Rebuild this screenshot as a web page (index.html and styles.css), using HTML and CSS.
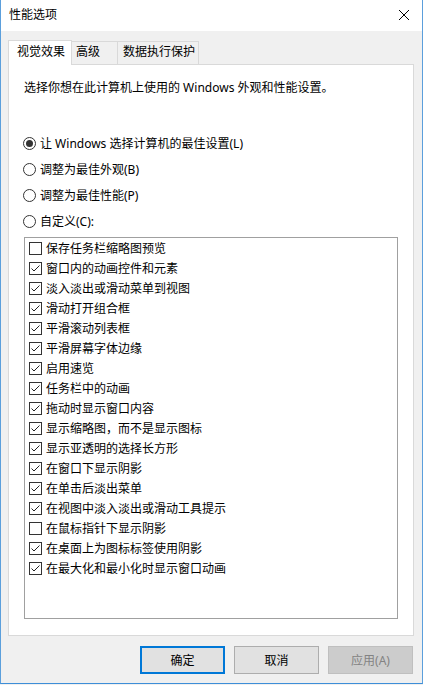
FILE: index.html
```html
<!DOCTYPE html>
<html lang="zh-CN">
<head>
<meta charset="utf-8">
<title>性能选项</title>
<link rel="stylesheet" href="styles.css">
</head>
<body>
<div class="window">
  <div class="titlebar">
    <span class="title">性能选项</span>
    <span class="close"><svg width="12" height="12" viewBox="0 0 12 12"><path d="M1 1 L11 11 M11 1 L1 11" stroke="#000" stroke-width="1" fill="none"/></svg></span>
  </div>
  <div class="content">
    <div class="tabs">
      <div class="tab tab-active">视觉效果</div>
      <div class="tab tab-adv">高级</div>
      <div class="tab tab-dep">数据执行保护</div>
    </div>
    <div class="panel">
      <p class="desc">选择你想在此计算机上使用的 Windows 外观和性能设置。</p>
      <div class="radios">
        <div class="radio-row"><span class="radio radio-on"></span><span>让 Windows 选择计算机的最佳设置(L)</span></div>
        <div class="radio-row"><span class="radio"></span><span>调整为最佳外观(B)</span></div>
        <div class="radio-row"><span class="radio"></span><span>调整为最佳性能(P)</span></div>
        <div class="radio-row"><span class="radio"></span><span>自定义(C):</span></div>
      </div>
      <div class="listbox">
        <div class="item"><span class="cb"></span><span>保存任务栏缩略图预览</span></div>
        <div class="item"><span class="cb cb-on"><svg width="11" height="11" viewBox="0 0 11 11"><path d="M1.5 5.5 L4 8 L9.5 2.5" stroke="#222" stroke-width="1" fill="none"/></svg></span><span>窗口内的动画控件和元素</span></div>
        <div class="item"><span class="cb cb-on"><svg width="11" height="11" viewBox="0 0 11 11"><path d="M1.5 5.5 L4 8 L9.5 2.5" stroke="#222" stroke-width="1" fill="none"/></svg></span><span>淡入淡出或滑动菜单到视图</span></div>
        <div class="item"><span class="cb cb-on"><svg width="11" height="11" viewBox="0 0 11 11"><path d="M1.5 5.5 L4 8 L9.5 2.5" stroke="#222" stroke-width="1" fill="none"/></svg></span><span>滑动打开组合框</span></div>
        <div class="item"><span class="cb cb-on"><svg width="11" height="11" viewBox="0 0 11 11"><path d="M1.5 5.5 L4 8 L9.5 2.5" stroke="#222" stroke-width="1" fill="none"/></svg></span><span>平滑滚动列表框</span></div>
        <div class="item"><span class="cb cb-on"><svg width="11" height="11" viewBox="0 0 11 11"><path d="M1.5 5.5 L4 8 L9.5 2.5" stroke="#222" stroke-width="1" fill="none"/></svg></span><span>平滑屏幕字体边缘</span></div>
        <div class="item"><span class="cb cb-on"><svg width="11" height="11" viewBox="0 0 11 11"><path d="M1.5 5.5 L4 8 L9.5 2.5" stroke="#222" stroke-width="1" fill="none"/></svg></span><span>启用速览</span></div>
        <div class="item"><span class="cb cb-on"><svg width="11" height="11" viewBox="0 0 11 11"><path d="M1.5 5.5 L4 8 L9.5 2.5" stroke="#222" stroke-width="1" fill="none"/></svg></span><span>任务栏中的动画</span></div>
        <div class="item"><span class="cb cb-on"><svg width="11" height="11" viewBox="0 0 11 11"><path d="M1.5 5.5 L4 8 L9.5 2.5" stroke="#222" stroke-width="1" fill="none"/></svg></span><span>拖动时显示窗口内容</span></div>
        <div class="item"><span class="cb cb-on"><svg width="11" height="11" viewBox="0 0 11 11"><path d="M1.5 5.5 L4 8 L9.5 2.5" stroke="#222" stroke-width="1" fill="none"/></svg></span><span>显示缩略图，而不是显示图标</span></div>
        <div class="item"><span class="cb cb-on"><svg width="11" height="11" viewBox="0 0 11 11"><path d="M1.5 5.5 L4 8 L9.5 2.5" stroke="#222" stroke-width="1" fill="none"/></svg></span><span>显示亚透明的选择长方形</span></div>
        <div class="item"><span class="cb cb-on"><svg width="11" height="11" viewBox="0 0 11 11"><path d="M1.5 5.5 L4 8 L9.5 2.5" stroke="#222" stroke-width="1" fill="none"/></svg></span><span>在窗口下显示阴影</span></div>
        <div class="item"><span class="cb cb-on"><svg width="11" height="11" viewBox="0 0 11 11"><path d="M1.5 5.5 L4 8 L9.5 2.5" stroke="#222" stroke-width="1" fill="none"/></svg></span><span>在单击后淡出菜单</span></div>
        <div class="item"><span class="cb cb-on"><svg width="11" height="11" viewBox="0 0 11 11"><path d="M1.5 5.5 L4 8 L9.5 2.5" stroke="#222" stroke-width="1" fill="none"/></svg></span><span>在视图中淡入淡出或滑动工具提示</span></div>
        <div class="item"><span class="cb"></span><span>在鼠标指针下显示阴影</span></div>
        <div class="item"><span class="cb cb-on"><svg width="11" height="11" viewBox="0 0 11 11"><path d="M1.5 5.5 L4 8 L9.5 2.5" stroke="#222" stroke-width="1" fill="none"/></svg></span><span>在桌面上为图标标签使用阴影</span></div>
        <div class="item"><span class="cb cb-on"><svg width="11" height="11" viewBox="0 0 11 11"><path d="M1.5 5.5 L4 8 L9.5 2.5" stroke="#222" stroke-width="1" fill="none"/></svg></span><span>在最大化和最小化时显示窗口动画</span></div>
      </div>
    </div>
    <div class="buttons">
      <button class="btn btn-default">确定</button>
      <button class="btn">取消</button>
      <button class="btn btn-disabled">应用(A)</button>
    </div>
  </div>
</div>
</body>
</html>
```

FILE: styles.css
```css
* { box-sizing: border-box; }
html, body { margin: 0; padding: 0; }
body {
  width: 423px;
  height: 685px;
  font-family: "Noto Sans", "Noto Sans CJK SC", sans-serif;
  font-size: 12px;
  color: #000;
  background: #f0f0f0;
}
.window {
  width: 423px;
  height: 684px;
  border-left: 1px solid #5b9fdc;
  border-right: 1px solid #5b9fdc;
  border-bottom: 1px solid #3d8ed8;
  background: #f0f0f0;
  display: flex;
  flex-direction: column;
}
.titlebar {
  height: 31px;
  flex: none;
  background: #fff;
  display: flex;
  align-items: center;
  justify-content: space-between;
  padding: 0 12px 1px 8px;
}
.title { font-size: 12px; line-height: 16px; }
.close { display: flex; width: 12px; height: 12px; }
.content {
  flex: 1;
  padding: 9px 8px 0 7px;
  display: flex;
  flex-direction: column;
}
.tabs {
  display: flex;
  align-items: flex-end;
  height: 24px;
  position: relative;
  z-index: 1;
}
.tab {
  height: 23px;
  line-height: 20px;
  background: #f0f0f0;
  border: 1px solid #d9d9d9;
  border-bottom: none;
  white-space: nowrap;
}
.tab-active {
  width: 64px;
  height: 25px;
  margin-bottom: -1px;
  background: #fff;
  padding-left: 8px;
  line-height: 22px;
}
.tab-adv { width: 46px; padding-left: 4px; border-left: none; }
.tab-dep { width: 81px; padding-left: 5px; border-left: none; }
.panel {
  height: 572px;
  flex: none;
  background: #fff;
  border: 1px solid #d9d9d9;
  padding: 0 15px;
  display: flex;
  flex-direction: column;
}
.desc {
  margin: 14px 0 0 0;
  line-height: 18px;
}
.radios {
  margin-top: 33px;
  display: flex;
  flex-direction: column;
}
.radio-row {
  height: 26px;
  display: flex;
  align-items: center;
  gap: 4px;
  margin-left: -1px;
}
.radio {
  width: 13px;
  height: 13px;
  border: 1px solid #333;
  border-radius: 50%;
  display: flex;
  align-items: center;
  justify-content: center;
  flex: none;
}
.radio-on::after {
  content: "";
  width: 7px;
  height: 7px;
  border-radius: 50%;
  background: #333;
}
.listbox {
  margin-top: 3px;
  height: 382px;
  border: 1px solid #a0a0a0;
  padding: 0 4px;
  display: flex;
  flex-direction: column;
}
.item {
  height: 20px;
  display: flex;
  align-items: center;
  gap: 4px;
}
.cb {
  width: 13px;
  height: 13px;
  border: 1px solid #333;
  display: flex;
  align-items: center;
  justify-content: center;
  flex: none;
  background: #fff;
}
.buttons {
  margin-top: 10px;
  display: flex;
  justify-content: flex-end;
  gap: 9px;
  padding-right: 1px;
}
.btn {
  width: 85px;
  height: 28px;
  font-family: "Noto Sans", "Noto Sans CJK SC", sans-serif;
  font-size: 12px;
  color: #000;
  background: #e1e1e1;
  border: 1px solid #adadad;
  padding: 0;
}
.btn-default { border: 2px solid #0078d7; }
.btn-disabled {
  background: #cccccc;
  border-color: #bfbfbf;
  color: #838383;
}
```
